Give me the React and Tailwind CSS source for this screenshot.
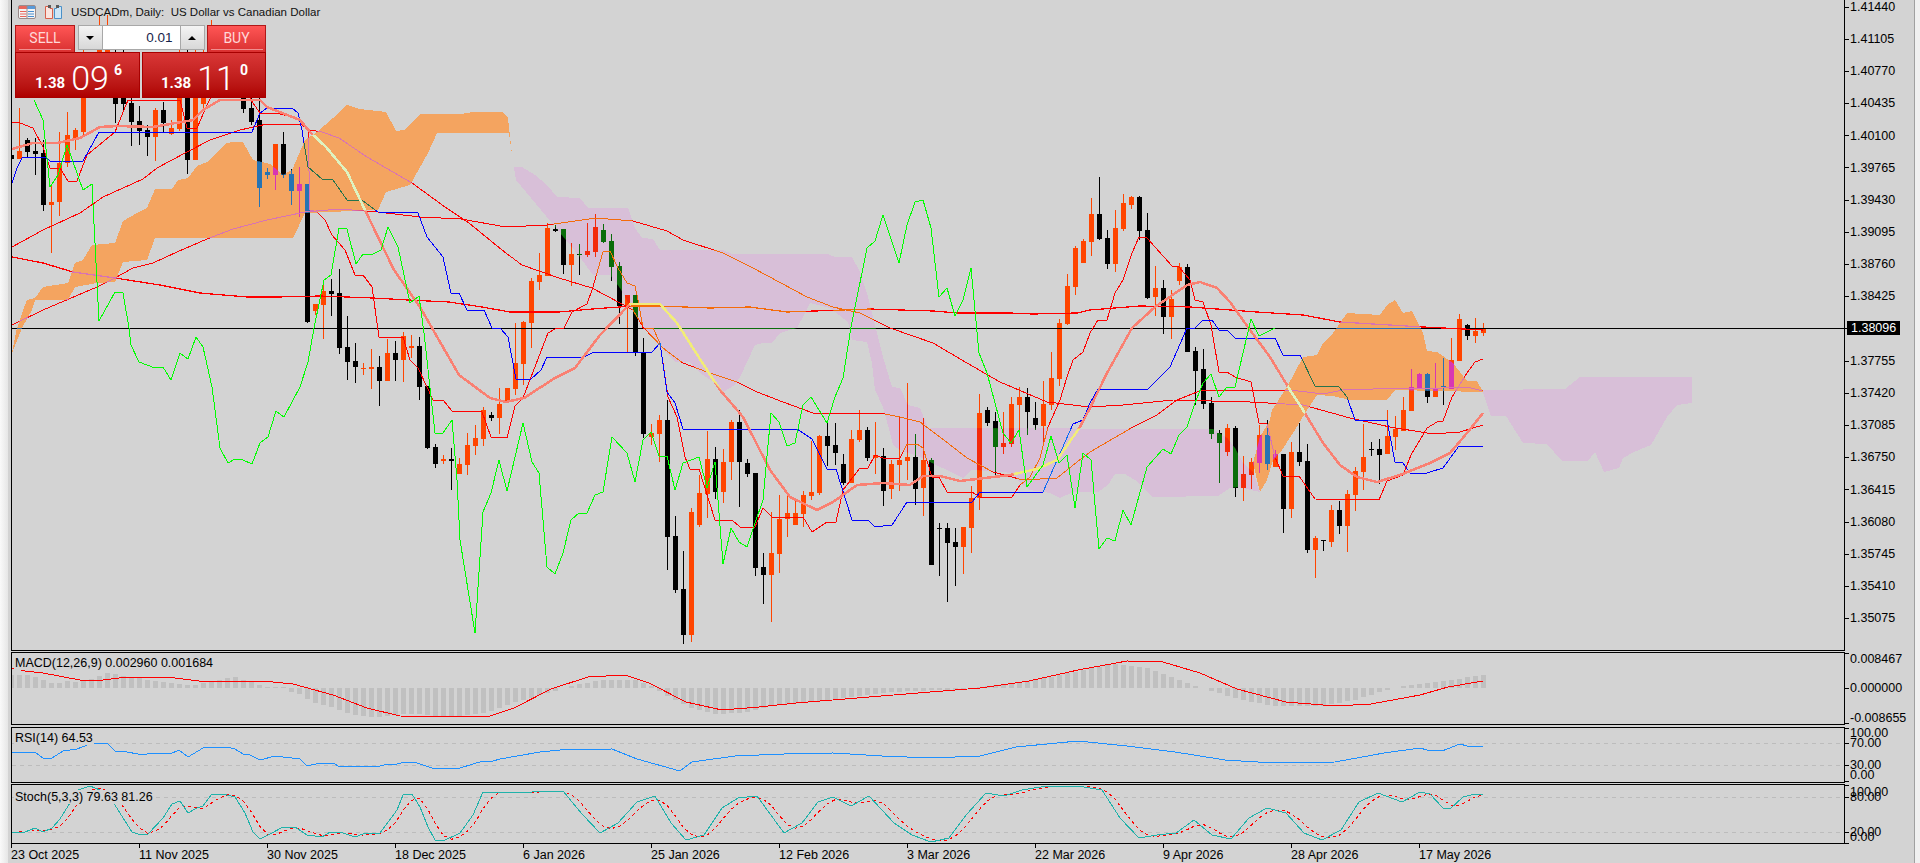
const font = { fontFamily: '"Liberation Sans", Arial, sans-serif' };

// [bodyTop, bodyBottom, high, low, up]  bar i sits at x = 11.5 + 8 * i
const candles = [
  [155,159,150,160,0],[151,159,108,159,1],[140,152,138,157,0],[151,154,138,175,0],[153,205,140,211,0],
  [202,205,185,253,1],[163,202,132,216,1],[135,163,112,167,1],[130,140,128,150,1],[60,132,50,136,1],
  null,[30,90,15,95,1],[30,90,15,95,1],[60,104,50,123,0],[60,104,50,110,0],
  [103,122,60,146,0],[121,131,106,145,0],[130,137,125,156,0],[110,137,108,161,1],[110,123,102,133,0],
  [128,134,120,135,1],[60,129,50,131,1],[60,160,50,174,0],[60,160,50,160,1],[60,104,50,110,1],
  [40,90,20,95,1],null,null,null,[60,109,50,113,0],
  [108,122,60,125,0],[120,188,60,207,0],[172,175,168,179,0],[144,175,144,190,1],[144,175,132,178,0],
  [174,191,169,205,0],[184,191,167,217,1],[184,322,184,323,0],[304,311,304,315,1],[291,305,283,339,1],
  [291,294,279,316,0],[293,348,269,354,0],[347,362,316,380,0],[361,367,343,383,0],[368,369,363,375,1],
  [367,369,349,389,1],[367,381,356,406,0],[353,381,339,381,1],[353,360,341,381,0],[336,360,332,382,1],
  [346,348,335,358,1],[346,387,337,400,0],[386,448,386,449,0],[447,464,444,468,0],[459,461,455,464,1],
  [459,461,448,490,0],[464,474,458,474,1],[445,465,433,475,1],[438,446,425,455,1],[410,439,407,446,1],
  [415,418,412,421,0],[404,418,388,434,1],[388,402,388,402,1],[363,389,323,395,1],[322,364,321,385,1],
  [281,323,278,348,1],[275,282,253,290,1],[228,276,223,276,1],[229,231,225,232,0],[229,265,229,274,0],
  [254,265,243,286,1],[254,255,244,275,0],[251,255,223,257,1],[227,252,214,257,1],[230,242,224,243,0],
  [241,267,234,281,0],[266,306,262,324,0],[295,306,295,352,1],[295,352,295,356,0],[352,434,338,438,0],
  [433,437,424,445,1],[420,434,415,462,1],[420,537,400,570,0],[536,590,516,593,0],[589,635,551,644,0],
  [512,635,508,642,1],[493,525,475,527,1],[459,494,431,518,1],[459,492,447,499,0],[462,492,449,503,1],
  [422,462,420,480,1],[422,462,410,507,0],[463,474,459,477,0],[473,568,473,576,0],[567,575,553,604,0],
  [553,575,512,622,1],[519,554,495,573,1],[513,519,496,537,1],[513,525,500,525,1],[495,514,491,527,1],
  [492,496,441,500,1],[436,493,435,495,1],[436,446,420,466,0],[445,453,423,465,0],[464,483,454,485,0],
  [439,483,430,483,1],[430,440,410,442,1],[430,458,427,461,0],[455,458,422,474,1],[456,491,448,506,0],
  [464,489,460,499,1],[460,465,416,491,1],[457,461,383,480,1],[457,489,434,505,0],[460,488,418,516,1],
  [460,565,458,565,0],[528,529,523,576,0],[528,543,523,602,0],[542,547,528,586,0],[527,547,527,574,1],
  [498,528,486,553,1],[413,498,394,510,1],[410,423,407,426,0],[421,447,412,477,0],[443,447,412,454,1],
  [404,444,397,447,1],[397,405,387,430,1],[397,412,388,435,0],[418,425,402,430,0],[404,426,381,444,1],
  [378,405,352,410,1],[323,379,319,386,1],[286,324,274,325,1],[248,287,246,295,1],[241,263,239,263,1],
  [214,242,198,256,1],[214,239,177,240,0],[238,264,230,269,0],[228,264,210,272,1],[203,229,194,231,1],
  [197,205,196,209,1],[197,231,196,240,0],[230,298,213,299,0],[288,297,266,316,1],[288,317,280,334,0],
  [299,317,290,339,1],[267,281,263,285,1],[267,352,264,352,0],[351,371,347,405,0],[369,404,349,409,0],
  [403,434,397,439,0],[433,443,430,483,0],[428,452,424,456,1],[428,488,426,497,0],[474,488,456,501,1],
  [462,475,458,489,1],[435,463,425,473,1],[435,464,420,470,0],[454,467,450,467,1],[454,509,454,533,0],
  [452,509,442,518,1],[452,462,423,466,0],[461,550,444,553,0],[538,550,536,578,1],[540,541,540,551,0],
  [510,542,505,547,1],[510,526,501,534,0],[494,526,490,552,1],[471,495,467,511,1],[457,472,424,490,1],
  [449,450,442,456,0],[449,455,439,484,0],[436,454,410,454,1],[429,437,416,450,1],[410,431,397,431,1],
  [387,411,369,411,1],[374,388,373,388,1],[374,397,373,403,0],[388,397,363,397,1],[386,387,358,405,0],
  [360,389,338,389,1],[319,361,314,361,1],[325,336,324,340,0],[331,336,318,343,1],[328,333,323,336,1],
];

const orangeA = "12,353 17,328 25,305 27,300 35,298 43,287 68,283 75,263 83,260 92,245 115,243 123,221 137,213 147,208 155,189 172,189 178,180 188,178 197,166 207,162 227,143 233,142 243,142 253,160 270,164 283,175 292,170 305,140 317,132 333,118 347,105 359,109 386,112 396,131 404,130 420,114 461,114 473,112 502,112 508,118 512,155 509,133 437,133 428,153 410,185 386,192 378,210 305,213 293,238 155,238 147,260 123,262 115,282 97,283 75,287 68,300 35,300 32,310 22,328";
const orangeB = "1260,492 1253,463 1260,437 1270,420 1272,410 1287,387 1303,357 1317,355 1323,343 1333,333 1347,313 1380,315 1387,305 1395,300 1403,313 1412,311 1423,333 1427,351 1437,352 1453,363 1467,381 1477,381 1483,392 1395,390 1387,400 1350,400 1333,396 1317,395 1307,410 1293,433 1282,450 1273,460 1267,480";
const purpleA = "512,155 514,167 522,167 535,175 547,185 557,197 580,198 588,208 628,208 635,228 642,238 653,239 660,250 723,250 732,254 828,254 835,257 852,257 860,272 868,297 877,333 883,357 892,387 900,388 908,405 920,408 928,428 1213,429 1227,438 1235,448 1243,463 1253,472 1260,492 1238,487 1230,488 1218,496 1153,497 1135,480 1125,474 1115,474 1108,485 1098,492 1073,492 1060,498 1050,493 1030,490 1020,483 1013,473 977,470 972,470 963,478 920,457 900,450 893,445 890,433 883,407 875,390 872,363 867,342 852,340 848,322 830,308 810,303 805,313 797,328 780,333 772,343 763,343 755,345 740,377 735,385 723,392 715,383 700,373 690,362 675,362 667,353 660,347 650,335 635,315 620,288 610,275 593,275 587,267 580,257 551,222 531,198 516,180";
const purpleB = "1482,390 1565,389 1580,377 1692,377 1692,403 1677,405 1667,417 1651,445 1634,452 1623,458 1619,468 1604,472 1595,452 1588,461 1562,461 1547,444 1523,443 1506,416 1491,416";

const kijun = "12,183 17,168 22,158 27,157 45,157 50,161 83,161 99,132 252,132 260,113 267,108 292,108 298,113 302,130 304,143 308,167 322,179 333,180 347,200 363,201 378,212 418,213 427,237 443,257 451,293 459,293 467,310 484,310 492,328 500,328 508,337 516,379 531,379 541,370 547,357 584,357 594,352 652,352 660,343 667,392 675,403 683,429 797,429 812,439 827,469 836,469 852,520 868,520 875,527 892,525 907,502 972,502 980,492 1043,492 1073,424 1083,420 1090,403 1098,389 1148,389 1170,367 1187,328 1195,328 1203,320 1212,320 1219,330 1227,330 1235,338 1275,338 1283,355 1300,355 1315,386 1339,387 1347,397 1355,420 1387,420 1395,462 1403,463 1410,473 1427,473 1443,468 1459,446 1483,446";
const tenkan = "12,122 20,123 33,128 43,147 50,168 60,168 68,181 77,181 87,155 115,132 128,100 180,100 187,128 197,128 208,103 230,60 251,100 260,113 280,114 297,118 308,130 310,210 317,212 325,220 332,235 345,250 355,275 363,275 372,287 379,337 403,337 410,360 418,368 427,387 433,400 443,400 452,411 482,412 491,437 507,438 515,406 523,398 548,333 557,328 564,328 572,312 587,304 593,287 603,252 610,251 618,268 627,283 635,286 638,300 643,328 653,328 660,343 668,397 677,417 685,457 690,469 699,469 715,520 732,520 740,527 755,527 763,508 772,517 803,517 812,532 827,522 836,522 843,490 860,468 868,468 875,455 883,458 900,458 907,444 917,444 923,448 932,477 939,477 947,492 972,492 980,497 1012,497 1020,485 1030,477 1040,458 1048,427 1060,400 1067,377 1073,360 1083,352 1090,333 1098,320 1107,320 1115,293 1123,280 1132,253 1139,237 1147,238 1172,266 1179,267 1190,280 1195,300 1203,302 1211,325 1219,372 1227,372 1235,377 1251,382 1259,423 1267,424 1275,457 1283,476 1299,476 1315,499 1379,500 1387,481 1403,475 1411,455 1427,428 1437,422 1443,421 1452,397 1467,373 1475,362 1483,359";
const ma50 = "12,247 43,230 80,213 103,197 143,179 157,168 187,152 210,140 240,130 267,124 300,124 310,130 322,132 339,138 367,157 412,183 445,207 469,223 502,250 522,265 559,278 592,288 620,303 633,310 643,327 663,348 683,363 707,372 737,382 757,392 783,402 813,413 880,413 900,417 920,422 940,437 967,458 993,472 1023,480 1057,478 1077,462 1090,452 1133,427 1157,415 1177,400 1202,390 1250,390 1290,390 1323,394 1343,390 1373,389 1443,388 1467,387 1483,391";
const ma100 = "12,325 43,310 97,287 115,278 133,268 153,263 177,252 207,239 233,229 267,220 305,212 339,209 378,212 420,217 461,219 506,227 547,225 596,218 633,221 667,231 683,240 723,253 753,268 807,297 833,307 860,313 890,328 933,343 967,363 1000,382 1047,402 1090,407 1123,405 1173,400 1250,402 1303,405 1350,418 1390,427 1433,434 1460,432 1483,425";
const ma200 = "12,257 43,263 73,272 115,278 160,285 200,293 247,297 277,297 320,296 373,298 408,300 449,302 482,307 510,312 559,312 592,309 633,306 660,306 710,308 750,307 787,312 870,309 933,311 957,313 1010,313 1033,314 1077,313 1090,310 1140,306 1190,307 1257,312 1303,315 1340,322 1423,327 1483,330";
const maThick = "12,149 33,143 57,143 80,138 100,127 117,126 153,127 193,120 203,110 220,100 260,100 267,107 300,120 310,132 326,147 347,172 365,210 394,270 420,307 459,375 490,398 506,402 524,398 555,378 575,368 600,335 630,304 660,304 677,323 707,370 720,390 743,417 770,470 790,497 817,510 833,502 857,485 883,483 910,485 923,476 940,476 960,481 1010,475 1037,469 1057,460 1080,427 1090,408 1107,373 1132,328 1155,307 1187,285 1200,282 1217,288 1230,302 1250,330 1270,357 1290,390 1303,410 1323,443 1340,465 1357,477 1377,482 1400,475 1430,463 1450,453 1467,433 1483,413";
const chikou = "34,100 43,120 50,187 58,175 67,145 83,190 92,184 95,243 99,321 115,292 123,293 129,328 131,345 139,362 155,368 163,367 171,380 180,353 188,359 196,337 203,347 212,387 220,448 228,463 235,459 243,460 252,464 260,443 268,437 276,411 284,417 300,387 308,362 314,328 324,280 331,275 339,228 347,229 356,264 363,254 373,254 381,250 388,227 398,247 410,303 419,296 424,333 435,433 443,433 452,420 457,480 460,540 475,633 483,512 491,493 499,460 507,491 523,423 532,462 539,473 547,567 555,574 563,553 571,520 579,513 587,513 595,495 603,492 612,437 627,453 635,482 643,440 651,432 659,456 667,456 675,490 683,463 699,457 707,488 715,462 723,564 731,528 739,542 747,547 755,523 763,500 771,413 779,422 787,446 795,443 803,405 811,397 827,423 835,397 843,378 851,327 867,248 875,241 883,215 899,263 907,225 915,202 923,200 931,228 939,297 947,288 955,316 963,300 971,268 979,353 987,373 1003,433 1011,443 1019,430 1027,487 1043,465 1051,436 1059,463 1067,455 1075,508 1083,453 1091,460 1099,549 1107,538 1115,541 1123,510 1131,525 1147,467 1163,449 1171,454 1179,435 1187,427 1195,403 1203,383 1211,374 1219,397 1227,387 1235,387 1251,319 1259,336 1275,328";

// histogram height per bar, positive is above the zero line
const macdBars = [
  13,13,13,11,8,5,5,7,6,8,9,12,15,14,12,10,10,8,7,6,5,4,3,3,5,7,8,10,11,8,6,3,1,1,1,-4,-6,-11,-15,-17,-19,-22,-25,-27,-28,-29,-29,-28,-27,-26,-26,-26,-27,-28,-29,-29,-29,-27,-26,-25,-23,-20,
  -17,-14,-12,-10,-7,-5,-3,0,2,4,5,7,8,8,8,8,8,5,2,-3,-8,-12,-16,-20,-22,-24,-26,-26,-25,-25,-24,-22,-20,-18,-16,-16,-15,-15,-14,-13,-12,-11,-10,-9,-8,-7,-6,-5,-4,-4,-3,-3,-3,-2,-2,-2,-2,-1,0,1,2,3,4,5,6,7,8,10,11,13,15,16,18,20,21,23,24,23,22,21,20,17,14,11,8,5,2,0,-3,-5,-8,-10,-12,-14,-15,-17,-18,-18,-18,-18,-18,-18,-18,-16,-15,-13,-12,-9,-7,-4,-2,0,2,3,4,5,6,7,8,9,11,12,13,
];
const macdSignal = "12,668 25,671 43,673 80,680 103,680 127,677 167,677 207,682 223,681 263,681 293,684 333,695 367,708 400,716 473,717 490,716 514,708 551,689 588,677 625,675 649,683 686,702 722,710 759,707 796,703 857,698 918,693 980,688 1029,681 1078,670 1127,661 1163,662 1200,673 1237,689 1286,702 1335,706 1371,704 1420,695 1448,687 1483,681";
const rsiLine = "12,752 35,752 43,758 52,758 63,751 77,749 90,744 107,743 115,751 127,752 138,754 147,754 157,753 170,754 179,750 188,757 203,748 227,747 235,749 243,754 250,755 260,760 275,756 300,759 307,766 320,763 335,764 338,766 377,767 387,764 397,764 405,762 417,763 432,768 460,768 473,764 483,761 493,761 500,759 540,752 560,750 612,749 637,759 680,771 692,762 735,756 784,754 833,753 882,756 931,758 980,756 1016,747 1078,741 1127,746 1175,752 1225,760 1274,763 1335,762 1384,753 1420,748 1427,750 1442,751 1460,744 1467,746 1483,746";
const stochMain = "12,832 25,832 35,828 43,832 52,828 60,819 70,803 78,790 90,786 100,790 113,802 132,832 138,834 148,834 163,818 172,804 180,801 188,813 197,808 203,806 212,794 223,794 235,797 245,813 253,832 260,839 270,834 283,827 295,827 307,835 322,837 330,832 343,833 355,837 363,834 380,833 397,810 403,795 412,794 420,807 428,827 435,840 443,841 460,833 473,815 483,792 502,793 563,791 582,814 600,833 618,823 637,802 655,796 671,823 686,840 704,835 722,808 738,798 757,796 784,833 802,823 818,802 833,797 851,806 869,796 894,823 912,835 931,842 949,838 967,814 986,793 1004,796 1022,790 1047,786 1078,786 1102,790 1120,818 1139,838 1157,835 1176,833 1194,820 1212,835 1231,839 1249,818 1267,808 1286,813 1304,833 1322,840 1341,830 1359,802 1378,793 1402,802 1420,792 1430,794 1443,808 1450,809 1463,797 1475,794 1483,795";

// signal is a 3 bar average of the main line
const stochAt = (x) => {
  const p = stochMain.split(" ").map((s) => s.split(",").map(Number));
  for (let k = 1; k < p.length; k++) {
    if (x <= p[k][0]) return p[k - 1][1] + ((x - p[k - 1][0]) / (p[k][0] - p[k - 1][0])) * (p[k][1] - p[k - 1][1]);
  }
  return p[p.length - 1][1];
};
const stochSignal = Array.from({ length: 184 }, (_, i) => {
  const x = 19.5 + 8 * i;
  return `${x},${((stochAt(x) + stochAt(x - 8) + stochAt(x - 16)) / 3).toFixed(1)}`;
}).join(" ");

// the empty slot is where the live price tag sits
const priceLabels = ["1.41440","1.41105","1.40770","1.40435","1.40100","1.39765","1.39430","1.39095","1.38760","1.38425","","1.37755","1.37420","1.37085","1.36750","1.36415","1.36080","1.35745","1.35410","1.35075"];
const dates = ["23 Oct 2025","11 Nov 2025","30 Nov 2025","18 Dec 2025","6 Jan 2026","25 Jan 2026","12 Feb 2026","3 Mar 2026","22 Mar 2026","9 Apr 2026","28 Apr 2026","17 May 2026"];

const plain = { up: "#ff4500", down: "#000000", red: "#ff0000", thick: "#fa8072", blue: "#0000ff" };
const onOrange = { up: "#d836b3", down: "#2773b3", red: "#d873b3", thick: "#ddf3c1", blue: "#27734c" };
const onPurple = { up: "#f4290b", down: "#0b6c0b", red: "#f46c0b", thick: "#f1ec79", blue: "#0b6cf4" };

function Layer({ c }) {
  return (
    <g shapeRendering="crispEdges">
      {candles.map((k, i) => {
        if (!k) return null;
        const x = 11.5 + 8 * i;
        const fill = k[4] ? c.up : c.down;
        return (
          <g key={i} fill={fill}>
            <rect x={x - 0.5} y={k[2]} width="1" height={Math.max(1, k[3] - k[2])} />
            <rect x={x - 2.5} y={k[0]} width="5" height={Math.max(1, k[1] - k[0])} />
          </g>
        );
      })}
      <line x1="12" y1="328.5" x2="1844" y2="328.5" stroke={c.down} />
      <g fill="none" strokeLinejoin="round">
        <polyline points={ma200} stroke={c.red} strokeWidth="1.25" />
        <polyline points={ma100} stroke={c.red} />
        <polyline points={ma50} stroke={c.red} />
        <polyline points={tenkan} stroke={c.red} />
        <polyline points={kijun} stroke={c.blue} />
        <polyline points={maThick} stroke={c.thick} strokeWidth="2.5" />
      </g>
    </g>
  );
}

function PriceChart() {
  return (
    <svg width="1832" height="650" viewBox="12 0 1832 650" className="block">
      <defs>
        <clipPath id="kumoOrange">
          <polygon points={orangeA} />
          <polygon points={orangeB} />
        </clipPath>
        <clipPath id="kumoPurple">
          <polygon points={purpleA} />
          <polygon points={purpleB} />
        </clipPath>
      </defs>
      <g shapeRendering="crispEdges">
        <polygon points={orangeA} fill="#f4a460" />
        <polygon points={orangeB} fill="#f4a460" />
        <polygon points={purpleA} fill="#d8bfd8" />
        <polygon points={purpleB} fill="#d8bfd8" />
      </g>
      <Layer c={plain} />
      <g clipPath="url(#kumoOrange)"><Layer c={onOrange} /></g>
      <g clipPath="url(#kumoPurple)"><Layer c={onPurple} /></g>
      <polyline points={chikou} fill="none" stroke="#00ff00" shapeRendering="crispEdges" />
    </svg>
  );
}

function WindowIcons() {
  return (
    <div className="flex items-center gap-[8px]">
      <svg width="18" height="14" viewBox="0 0 18 14">
        <rect x="0.5" y="0.5" width="17" height="13" rx="1.5" fill="#f4f4f4" stroke="#9a8a8a" />
        <rect x="1" y="1" width="8" height="3" fill="#e8655a" />
        <rect x="9" y="1" width="8" height="3" fill="#5a9ad8" />
        <path d="M2 6.5H8.5M2 9H8.5M2 11.5H8.5" stroke="#e8655a" />
        <path d="M10 6.5H16M10 9H16M10 11.5H16" stroke="#4a8ed0" />
        <path d="M9 1V13" stroke="#9a8a8a" />
      </svg>
      <svg width="19" height="14" viewBox="0 0 19 14">
        <path d="M1.5 1.5H6V3.5H8.5V13.5H1.5Z" fill="#fbe4de" stroke="#d8604c" />
        <path d="M10.5 3.5H12.5V1.5H17.5V13.5H10.5Z" fill="#cfe6f6" stroke="#4a90c8" />
        <rect x="4" y="0" width="3" height="3" fill="#5a5a5a" />
        <rect x="12" y="0" width="3" height="3" fill="#5a5a5a" />
      </svg>
    </div>
  );
}

function QuoteBox({ big, sup, width, pad }) {
  return (
    <div className={`flex h-[46px] items-end border border-[#a80000] bg-linear-to-b from-[#d93636] to-[#ae0000] pb-[6px] text-white ${width} ${pad}`} style={{ fontFamily: "Roboto, sans-serif" }}>
      <span className="text-[15px] leading-none font-bold">1.38</span>
      <span className="ml-[6px] text-[34px] leading-[26px] font-light">{big}</span>
      <span className="mb-[14px] ml-[5px] text-[14px] leading-none font-bold">{sup}</span>
    </div>
  );
}

function SideButton({ text, width }) {
  return (
    <div className={`flex h-[27px] flex-col items-center border-x border-t border-[#b01818] bg-linear-to-b from-[#ff5555] to-[#d93030] pt-[3px] ${width}`} style={{ fontFamily: "Roboto, sans-serif" }}>
      <span className="text-[14px] leading-[18px] text-[#ffd8d8]">{text}</span>
      <span className="mt-[2px] h-px w-[52px] bg-[#f09090]" />
    </div>
  );
}

function TradePanel() {
  return (
    <div className="w-[251px]">
      <div className="flex justify-between">
        <SideButton text="SELL" width="w-[60px]" />
        <div className="flex h-[25px] w-[127px] border border-[#a8a8a8] bg-white">
          <div className="flex w-[24px] items-center justify-center border-r border-[#a8a8a8] bg-linear-to-b from-[#f4f4f4] to-[#d8d8d8]">
            <span className="h-0 w-0 border-x-[4px] border-t-[4px] border-x-transparent border-t-black" />
          </div>
          <div className="flex-1 pr-[7px] text-right text-[13.5px] leading-[23px] text-[#16244a]">0.01</div>
          <div className="flex w-[24px] items-center justify-center border-l border-[#a8a8a8] bg-linear-to-b from-[#f4f4f4] to-[#d8d8d8]">
            <span className="h-0 w-0 border-x-[4px] border-b-[4px] border-x-transparent border-b-black" />
          </div>
        </div>
        <SideButton text="BUY" width="w-[59px]" />
      </div>
      <div className="flex justify-between">
        <QuoteBox big="09" sup="6" width="w-[125px]" pad="pl-[19px]" />
        <QuoteBox big="11" sup="0" width="w-[124px]" pad="pl-[18px]" />
      </div>
    </div>
  );
}

// tick and label rows sit at zero height so neighbours may overlap, as they do on the chart
function AxisRows({ rows }) {
  return (
    <div className="flex flex-col">
      {rows.map(([gap, text, tick], i) => (
        <div key={i} className={`flex h-0 items-center ${gap}`}>
          <span className={`h-px w-[4px] shrink-0 ${tick ? "bg-black" : ""}`} />
          {text && <span className="ml-[1px] text-[12.5px] leading-none text-black">{text}</span>}
        </div>
      ))}
    </div>
  );
}

function SubPanel({ className, height, top, label, labelTop, rows, children }) {
  return (
    <div className={`flex ${className}`}>
      <div className={`relative w-[1834px] border border-black ${height}`}>
        <svg width="1832" height="100%" viewBox={top} className="block h-full" preserveAspectRatio="none">
          {children}
        </svg>
        <span className={`absolute left-[2px] bg-[#d3d3d3] px-px text-[12.5px] leading-[14px] text-black ${labelTop}`}>{label}</span>
      </div>
      <AxisRows rows={rows} />
    </div>
  );
}

const levelLine = (y) => <line x1="12" x2="1844" y1={y} y2={y} stroke="#bcbcbc" strokeDasharray="4 4" />;

export default function App() {
  return (
    <div className="flex h-[863px] w-[1920px] overflow-hidden bg-[#f0f0f0]" style={font}>
      <div className="w-[8px] bg-linear-to-r from-[#fafafa] to-[#e6e6e6]" />
      <div className="w-[1907px] border-r border-[#a0a0a0] bg-[#d3d3d3] pl-[3px]">
        <div className="flex">
          <div className="relative w-[1834px] border-x border-b border-black">
            <PriceChart />
            <div className="absolute top-[5px] left-[6px] flex items-center gap-[8px]">
              <WindowIcons />
              <span className="text-[11.5px] leading-[14px] whitespace-pre text-[#111]">USDCADm, Daily:  US Dollar vs Canadian Dollar</span>
            </div>
            <div className="absolute top-[25px] left-[3px]">
              <TradePanel />
            </div>
          </div>
          <div className="relative flex flex-col pt-[7px]">
            {priceLabels.map((p, i) => (
              <div key={i} className="flex h-[32.2px] items-start">
                {p && (
                  <div className="flex h-0 items-center">
                    <span className="h-px w-[4px] bg-black" />
                    <span className="ml-[1px] text-[12.5px] leading-none text-black">{p}</span>
                  </div>
                )}
              </div>
            ))}
            <div className="absolute top-[321px] left-0 flex items-center">
              <span className="h-px w-[2px] bg-black" />
              <span className="bg-black px-[4px] text-[12.5px] leading-[14px] text-white">1.38096</span>
            </div>
          </div>
        </div>

        <SubPanel
          className="mt-px"
          height="h-[73px]"
          top="12 653 1832 71"
          label="MACD(12,26,9) 0.002960 0.001684"
          labelTop="top-[3px]"
          rows={[["mt-px", null, true], ["mt-[6px]", "0.008467", false], ["mt-[29px]", "0.000000", true], ["mt-[30px]", "-0.008655", false], ["mt-[5px]", null, true]]}
        >
          <g fill="#c0c0c0" shapeRendering="crispEdges">
            {macdBars.map((h, i) => (
              <rect key={i} x={9 + 8 * i} y={h > 0 ? 688 - h : 688} width="5" height={Math.abs(h)} />
            ))}
          </g>
          <polyline points={macdSignal} fill="none" stroke="#ff0000" shapeRendering="crispEdges" />
        </SubPanel>

        <SubPanel
          className="mt-[2px]"
          height="h-[56px]"
          top="12 728 1832 54"
          label="RSI(14) 64.53"
          labelTop="top-[3px]"
          rows={[["mt-px", null, true], ["mt-[5px]", "100.00", false], ["mt-[10px]", "70.00", true], ["mt-[22px]", "30.00", true], ["mt-[10px]", "0.00", false], ["mt-[6px]", null, true]]}
        >
          {levelLine(743.5)}
          {levelLine(765.5)}
          <polyline points={rsiLine} fill="none" stroke="#1e90ff" shapeRendering="crispEdges" />
        </SubPanel>

        <SubPanel
          className="mt-px"
          height="h-[60px]"
          top="12 785 1832 58"
          label="Stoch(5,3,3) 79.63 81.26"
          labelTop="top-[5px]"
          rows={[["mt-px", null, true], ["mt-[7px]", "100.00", false], ["mt-[5px]", "80.00", true], ["mt-[35px]", "20.00", true], ["mt-[5px]", "0.00", false], ["mt-[6px]", null, true]]}
        >
          {levelLine(797.5)}
          {levelLine(832.5)}
          <polyline points={stochSignal} fill="none" stroke="#ff0000" strokeDasharray="3 3" shapeRendering="crispEdges" />
          <polyline points={stochMain} fill="none" stroke="#20b2aa" shapeRendering="crispEdges" />
        </SubPanel>

        <div className="flex">
          {dates.map((d) => (
            <div key={d} className="w-[128px]">
              <div className="h-[4px] w-px bg-black" />
              <div className="text-[12.5px] leading-[14px] whitespace-nowrap text-black">{d}</div>
            </div>
          ))}
        </div>
      </div>
    </div>
  );
}
